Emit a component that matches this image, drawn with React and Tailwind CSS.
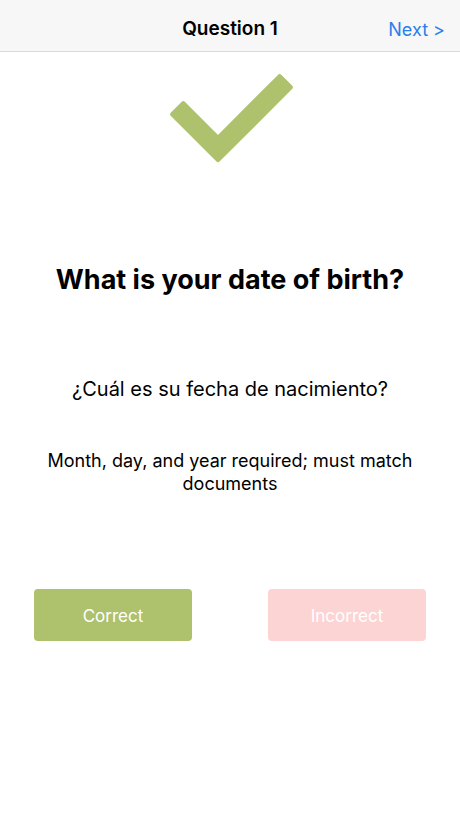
import React from "react";

const CheckMark = () => (
  <svg width="140" height="108" viewBox="160 64 140 108">
    <polygon
      points="183.3,101.7 218,136.4 279.7,74.7 290.3,85.3 218,157.6 172.7,112.3"
      fill="#aec16c"
      stroke="#aec16c"
      strokeWidth="5"
      strokeLinejoin="round"
    />
  </svg>
);

const App = () => {
  return (
    <div
      className="min-h-screen w-full bg-white text-black"
      style={{ fontFamily: "Inter, 'Liberation Sans', sans-serif" }}
    >
      <div className="grid h-[52px] grid-cols-[1fr_auto_1fr] items-center border-b border-[#d9d9d9] bg-[#f7f7f7] pt-[7px]">
        <div />
        <div className="text-[19px] font-semibold">Question 1</div>
        <div className="pr-[15px] text-right text-[18px] text-[#2a7fec]">Next &gt;</div>
      </div>

      <div className="flex flex-col items-center">
        <div className="mt-[14px]">
          <CheckMark />
        </div>

        <h1 className="mt-[90px] text-[27px] font-bold leading-[32px]">
          What is your date of birth?
        </h1>

        <p className="mt-[81px] text-[20px] leading-[24px]">¿Cuál es su fecha de nacimiento?</p>

        <p className="mt-[48px] px-[40px] text-center text-[18px] leading-[23px]">
          Month, day, and year required; must match documents
        </p>

        <div className="mt-[94px] flex w-full justify-between px-[34px]">
          <button className="h-[52px] w-[158px] rounded-[4px] bg-[#aec16c] pt-[3px] text-[17px] text-white">
            Correct
          </button>
          <button className="h-[52px] w-[158px] rounded-[4px] bg-[#fdd4d4] pt-[3px] text-[17px] text-white">
            Incorrect
          </button>
        </div>
      </div>
    </div>
  );
};

export default App;
